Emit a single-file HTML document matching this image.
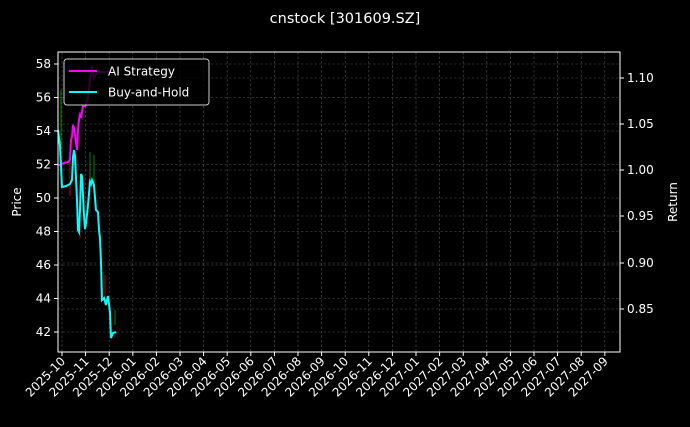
<!DOCTYPE html><html><head><style>body{margin:0;background:#000;width:690px;height:422px;overflow:hidden}</style></head><body>
<svg width="690" height="422" xmlns="http://www.w3.org/2000/svg" font-family="DejaVu Sans, Liberation Sans, sans-serif" font-size="12" fill="#fff">
<rect width="690" height="422" fill="#000"/>
<text x="345" y="23" text-anchor="middle" font-size="14.5">cnstock [301609.SZ]</text>
<g stroke="#555" stroke-width="0.6" stroke-dasharray="2.5,2">
<line x1="58" x2="620" y1="64" y2="64"/><line x1="58" x2="620" y1="97.5" y2="97.5"/><line x1="58" x2="620" y1="131" y2="131"/><line x1="58" x2="620" y1="164.5" y2="164.5"/><line x1="58" x2="620" y1="198" y2="198"/><line x1="58" x2="620" y1="231.5" y2="231.5"/><line x1="58" x2="620" y1="265" y2="265"/><line x1="58" x2="620" y1="298.5" y2="298.5"/><line x1="58" x2="620" y1="332" y2="332"/>
<line x1="58" x2="620" y1="78" y2="78"/><line x1="58" x2="620" y1="124" y2="124"/><line x1="58" x2="620" y1="170" y2="170"/><line x1="58" x2="620" y1="216" y2="216"/><line x1="58" x2="620" y1="263" y2="263"/><line x1="58" x2="620" y1="309" y2="309"/>
</g>
<g id="vg" stroke="#555" stroke-width="0.6" stroke-dasharray="2.5,2"></g>
<g stroke="#c00" stroke-width="1"><line x1="58" y1="58" x2="58" y2="140"/><line x1="70" y1="150" x2="70" y2="196"/><line x1="80" y1="205" x2="80" y2="238"/><line x1="90" y1="170" x2="90" y2="190"/><line x1="105" y1="275" x2="105" y2="305"/></g>
<g stroke="#080" stroke-width="1"><line x1="61" y1="90" x2="61" y2="150"/><line x1="90" y1="152" x2="90" y2="180"/><line x1="94" y1="155" x2="94" y2="185"/><line x1="115" y1="310" x2="115" y2="325"/></g>
<polyline fill="none" stroke="#f0f" stroke-width="2" points="58,165 60,165 64,163 68,162 70,160 71,140 72,137 73,125 74,128 75,135 77,150 78,130 79,120 80,115 81,118 82,112 83,106 85,106 86,105 88,98 90,80 92,66 94,78 97,72 100,72 115,72"/>
<polyline fill="none" stroke="#0ff" stroke-width="2" points="58,130 60,146 62,187 66,186 70,184 72,180 73,157 74,150 75,156 77,200 78,230 79,232 80,210 81,174 82,176 84,215 85,229 86,224 88,205 90,182 91,184 92,180 94,185 96,210 98,212 99,230 100,238 101,262 102,300 104,298 106,305 107,300 108,296 110,312 111,338 113,333 116,332"/>
<rect x="58" y="52" width="562" height="300" fill="none" stroke="#fff" stroke-width="1"/>
<g stroke="#fff"><line x1="54" x2="58" y1="64" y2="64"/><line x1="54" x2="58" y1="97.5" y2="97.5"/><line x1="54" x2="58" y1="131" y2="131"/><line x1="54" x2="58" y1="164.5" y2="164.5"/><line x1="54" x2="58" y1="198" y2="198"/><line x1="54" x2="58" y1="231.5" y2="231.5"/><line x1="54" x2="58" y1="265" y2="265"/><line x1="54" x2="58" y1="298.5" y2="298.5"/><line x1="54" x2="58" y1="332" y2="332"/>
<line x1="620" x2="624" y1="78" y2="78"/><line x1="620" x2="624" y1="124" y2="124"/><line x1="620" x2="624" y1="170" y2="170"/><line x1="620" x2="624" y1="216" y2="216"/><line x1="620" x2="624" y1="263" y2="263"/><line x1="620" x2="624" y1="309" y2="309"/></g>
<g text-anchor="end"><text x="51" y="68">58</text><text x="51" y="101.5">56</text><text x="51" y="135">54</text><text x="51" y="168.5">52</text><text x="51" y="202">50</text><text x="51" y="235.5">48</text><text x="51" y="269">46</text><text x="51" y="302.5">44</text><text x="51" y="336">42</text></g>
<g><text x="627" y="82">1.10</text><text x="627" y="128">1.05</text><text x="627" y="174">1.00</text><text x="627" y="220">0.95</text><text x="627" y="267">0.90</text><text x="627" y="313">0.85</text></g>
<text transform="translate(21,202) rotate(-90)" text-anchor="middle">Price</text>
<text transform="translate(677,202) rotate(-90)" text-anchor="middle">Return</text>
<g id="xt"></g>
<rect x="64" y="59" width="145" height="46" rx="3" fill="#000" fill-opacity="0.8" stroke="#ccc" stroke-width="1"/>
<line x1="69" x2="97" y1="71" y2="71" stroke="#f0f" stroke-width="2"/><text x="108" y="75.5">AI Strategy</text>
<line x1="69" x2="97" y1="92" y2="92" stroke="#0ff" stroke-width="2"/><text x="108" y="96.5">Buy-and-Hold</text>
</svg>
<script>
var L=["2025-10","2025-11","2025-12","2026-01","2026-02","2026-03","2026-04","2026-05","2026-06","2026-07","2026-08","2026-09","2026-10","2026-11","2026-12","2027-01","2027-02","2027-03","2027-04","2027-05","2027-06","2027-07","2027-08","2027-09"];
var ns="http://www.w3.org/2000/svg",vg=document.getElementById("vg"),xt=document.getElementById("xt");
L.forEach(function(s,i){var x=62+i*23.6;
var l=document.createElementNS(ns,"line");l.setAttribute("x1",x);l.setAttribute("x2",x);l.setAttribute("y1",52);l.setAttribute("y2",352);vg.appendChild(l);
var t=document.createElementNS(ns,"line");t.setAttribute("x1",x);t.setAttribute("x2",x);t.setAttribute("y1",352);t.setAttribute("y2",356);t.setAttribute("stroke","#fff");xt.appendChild(t);
var tx=document.createElementNS(ns,"text");tx.setAttribute("text-anchor","end");tx.setAttribute("transform","translate("+(x+4)+",362) rotate(-45)");tx.textContent=s;xt.appendChild(tx);});
</script>
</body></html>
